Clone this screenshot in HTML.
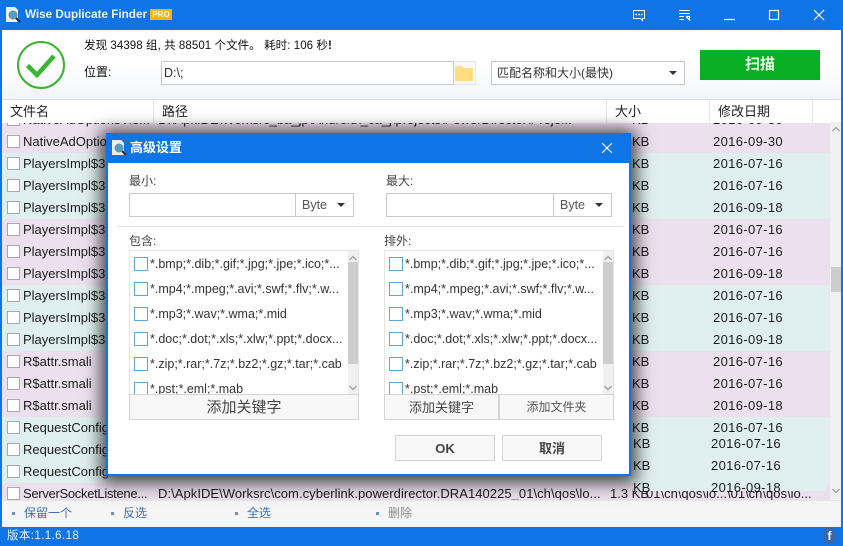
<!DOCTYPE html>
<html><head><meta charset="utf-8">
<style>
*{box-sizing:border-box;margin:0;padding:0}
html,body{width:843px;height:546px;overflow:hidden;background:#fff}
body{position:relative;font-family:"Liberation Sans","Noto Sans CJK SC",sans-serif;font-size:12px;color:#222}
.a{position:absolute;white-space:nowrap}
.row{position:absolute;left:2px;width:828px;height:22px}
.cb{position:absolute;left:5px;top:4px;width:13px;height:13px;background:#fff;border:1px solid #a9a9a9}
.nm{position:absolute;left:21px;top:0;line-height:21px;font-size:13px;color:#1c1c1c;white-space:nowrap}
.kb{position:absolute;left:630px;top:0;line-height:21px;font-size:13px;color:#1c1c1c}
.dt{position:absolute;left:711px;top:0;line-height:21px;font-size:13px;letter-spacing:.35px;color:#1c1c1c}
.th{position:absolute;top:100px;height:23px;line-height:24px;font-size:13px;color:#222;background:#fff;border-right:1px solid #e6e6e6}
.box{position:absolute;border:1px solid #c9c9c9;background:#fff}
.it{position:absolute;left:4px;width:222px;height:25px}
.ck{position:absolute;left:0;top:4px;width:14px;height:14px;border:1px solid #5ca6de;background:#fff}
.tx{position:absolute;left:16px;top:2px;line-height:19px;font-size:12.500px;color:#333;white-space:nowrap}
.btn{position:absolute;border:1px solid #d4d4d4;background:#f8f8f8;text-align:center;color:#444}
.arrow{position:absolute;width:0;height:0;border-left:4px solid transparent;border-right:4px solid transparent;border-top:4px solid #333}
.dot{position:absolute;top:512px;width:3px;height:3px;background:#6f93b8}
.act{position:absolute;top:505px;line-height:16px;font-size:12px;color:#3f6fb5}
</style></head><body>

<!-- title bar -->
<div class="a" style="left:0;top:0;width:843px;height:30px;background:#0f74e5"></div>
<svg class="a" style="left:4px;top:6px" width="18" height="18" viewBox="0 0 18 18"><path d="M2 1h9l3 3v12H2z" fill="#e9eef0"/><circle cx="9" cy="9" r="4" fill="#4da0c6" stroke="#7b8d99"/><path d="M12 12l4 4" stroke="#16324a" stroke-width="2"/></svg>
<div class="a" style="left:25px;top:5px;line-height:19px;font-size:11.700px;font-weight:bold;color:#e9f3ff">Wise Duplicate Finder</div>
<div class="a" style="left:150px;top:9px;width:22px;height:11px;background:#ffb200;color:#fff;font-size:8px;font-weight:bold;line-height:11px;text-align:center">PRO</div>

<svg class="a" style="left:620px;top:0" width="223" height="30" viewBox="0 0 223 30" fill="none" stroke="#fff">
<path d="M13.500 10.500h11v8h-2v2l-2-2h-7z" stroke-width="1"/>
<path d="M15.500 14.500h1.500M18.300 14.500h1.500M21 14.500h1.500" stroke-width="1.500"/>
<path d="M59 10.500h11M59 13.500h11M59 16.500h5M59 19.500h5" stroke-width="1"/>
<path d="M66 16.500h3.500v3.500M66 16.500l4 4" stroke-width="1.200"/>
<path d="M104 19.500h11" stroke-width="1.200"/>
<rect x="149.500" y="10.500" width="9" height="9" stroke-width="1.200"/>
<path d="M194 10l10 10M204 10l-10 10" stroke-width="1.200"/>
</svg>

<!-- top panel -->
<div class="a" style="left:2px;top:30px;width:839px;height:70px;background:linear-gradient(#ffffff 0%,#ffffff 45%,#f1f4f8 100%)"></div>
<div class="a" style="left:0;top:30px;width:2px;height:497px;background:#0f74e5"></div>
<div class="a" style="left:841px;top:30px;width:2px;height:497px;background:#0f74e5"></div>

<svg class="a" style="left:16px;top:40px" width="50" height="50" viewBox="0 0 50 50" fill="none"><circle cx="25" cy="25" r="23" stroke="#3ab52f" stroke-width="2"/><path d="M11.500 25.500l9.500 9.500L38 16" stroke="#3ab52f" stroke-width="4.500"/></svg>

<div class="a" style="left:84px;top:38px;line-height:17px;font-size:11.500px;letter-spacing:.07px;color:#111">发现 34398 组, 共 88501 个文件。 耗时: 106 秒<b>!</b></div>
<div class="a" style="left:84px;top:63px;line-height:18px;font-size:12px;color:#111">位置:</div>
<div class="box" style="left:161px;top:61px;width:293px;height:24px;border-color:#c4c8cc;line-height:22px;padding-left:2px;font-size:12.500px;color:#333">D:\;</div>
<div class="a" style="left:453px;top:61px;width:23px;height:24px;background:#f7f8fa;border:1px solid #e4e6e9;border-left:1px solid #c4c8cc"></div>
<svg class="a" style="left:455px;top:65px" width="18" height="16" viewBox="0 0 18 16"><path d="M0 1h7l2 2h9v13H0z" fill="#ffe08a"/><path d="M0 5h18v11H0z" fill="#ffdc7d"/></svg>
<div class="box" style="left:491px;top:61px;width:194px;height:24px;border-color:#c4c8cc;line-height:22px;padding-left:5px;font-size:12px;color:#333">匹配名称和大小(最快)</div>
<div class="arrow" style="left:669px;top:71px"></div>
<div class="a" style="left:700px;top:50px;width:120px;height:30px;background:#09b026;color:#e8ffe8;font-size:15px;font-weight:bold;text-align:center;line-height:30px">扫描</div>

<!-- list -->
<div class="a" style="left:2px;top:99px;width:839px;height:1px;background:#dcdcdc"></div>
<div class="a" style="left:2px;top:122px;width:828px;height:378px;background:#dfeeef"></div>
<div class="row" style="top:109px;background:#ecdfee"><div class="cb"></div><div class="nm">NativeAdOptionsVie...</div><div class="a" style="left:156px;top:0;line-height:21px;font-size:13px">D:\ApkIDE\Worksrc_ba_jp\Android\_ca_j\projects\PowerDirector\Proje...</div><div class="kb">KB</div><div class="dt">2016-09-30</div></div>
<div class="th" style="left:2px;width:152px;padding-left:8px">文件名</div>
<div class="th" style="left:154px;width:453px;padding-left:8px">路径</div>
<div class="th" style="left:607px;width:103px;padding-left:8px">大小</div>
<div class="th" style="left:710px;width:103px;padding-left:8px">修改日期</div>
<div class="th" style="left:813px;width:28px;border-right:0"></div>

<div class="row" style="top:131px;background:#ecdfee"><div class="cb"></div><div class="nm">NativeAdOptionsVie</div><div class="kb">KB</div><div class="dt">2016-09-30</div></div>
<div class="row" style="top:153px;background:#dfeeef"><div class="cb"></div><div class="nm">PlayersImpl$32</div><div class="kb">KB</div><div class="dt">2016-07-16</div></div>
<div class="row" style="top:175px;background:#dfeeef"><div class="cb"></div><div class="nm">PlayersImpl$32</div><div class="kb">KB</div><div class="dt">2016-07-16</div></div>
<div class="row" style="top:197px;background:#dfeeef"><div class="cb"></div><div class="nm">PlayersImpl$32</div><div class="kb">KB</div><div class="dt">2016-09-18</div></div>
<div class="row" style="top:219px;background:#ecdfee"><div class="cb"></div><div class="nm">PlayersImpl$33</div><div class="kb">KB</div><div class="dt">2016-07-16</div></div>
<div class="row" style="top:241px;background:#ecdfee"><div class="cb"></div><div class="nm">PlayersImpl$33</div><div class="kb">KB</div><div class="dt">2016-07-16</div></div>
<div class="row" style="top:263px;background:#ecdfee"><div class="cb"></div><div class="nm">PlayersImpl$33</div><div class="kb">KB</div><div class="dt">2016-09-18</div></div>
<div class="row" style="top:285px;background:#dfeeef"><div class="cb"></div><div class="nm">PlayersImpl$34</div><div class="kb">KB</div><div class="dt">2016-07-16</div></div>
<div class="row" style="top:307px;background:#dfeeef"><div class="cb"></div><div class="nm">PlayersImpl$34</div><div class="kb">KB</div><div class="dt">2016-07-16</div></div>
<div class="row" style="top:329px;background:#dfeeef"><div class="cb"></div><div class="nm">PlayersImpl$34</div><div class="kb">KB</div><div class="dt">2016-09-18</div></div>
<div class="row" style="top:351px;background:#ecdfee"><div class="cb"></div><div class="nm">R$attr.smali</div><div class="kb">KB</div><div class="dt">2016-07-16</div></div>
<div class="row" style="top:373px;background:#ecdfee"><div class="cb"></div><div class="nm">R$attr.smali</div><div class="kb">KB</div><div class="dt">2016-07-16</div></div>
<div class="row" style="top:395px;background:#ecdfee"><div class="cb"></div><div class="nm">R$attr.smali</div><div class="kb">KB</div><div class="dt">2016-09-18</div></div>
<div class="row" style="top:417px;background:#dfeeef"><div class="cb"></div><div class="nm">RequestConfig</div><div class="kb">KB</div><div class="dt">2016-07-16</div></div>
<div class="row" style="top:439px;background:#dfeeef"><div class="cb"></div><div class="nm">RequestConfig</div><div class="a" style="left:631px;top:-6px;line-height:21px;font-size:13px;color:#1c1c1c">KB</div><div class="a" style="left:709px;top:-6px;line-height:21px;font-size:13px;letter-spacing:.35px;color:#1c1c1c">2016-07-16</div></div>
<div class="row" style="top:461px;background:#dfeeef"><div class="cb"></div><div class="nm">RequestConfig</div><div class="a" style="left:631px;top:-6px;line-height:21px;font-size:13px;color:#1c1c1c">KB</div><div class="a" style="left:709px;top:-6px;line-height:21px;font-size:13px;letter-spacing:.35px;color:#1c1c1c">2016-07-16</div></div>
<div class="row" style="top:483px;height:17px;background:#ecdfee;overflow:hidden"><div class="cb"></div><div class="nm" style="letter-spacing:-.3px">ServerSocketListene...</div><div class="a" style="left:156px;top:0;line-height:21px;font-size:13px;letter-spacing:.05px;color:#1c1c1c">D:\ApkIDE\Worksrc\com.cyberlink.powerdirector.DRA140225_01\ch\qos\lo...</div><div class="a" style="left:608px;top:0;line-height:21px;font-size:13px;color:#1c1c1c">1.3 KB</div><div class="a" style="left:644px;top:0;line-height:21px;font-size:13px;color:#1c1c1c">01\ch\qos\lo...</div><div class="a" style="left:725px;top:0;line-height:21px;font-size:13px;color:#1c1c1c">\01\ch\qos\lo...</div></div>
<div class="a" style="left:633px;top:476px;width:193px;height:15px;background:#dfeeef"></div>
<div class="a" style="left:711px;top:479px;line-height:17px;font-size:13px;letter-spacing:.35px;color:#1c1c1c">2016-09-18</div>
<div class="a" style="left:633px;top:479px;line-height:17px;font-size:13px;color:#1c1c1c">KB</div>

<!-- scrollbar -->
<div class="a" style="left:830px;top:122px;width:11px;height:378px;background:#f0f0f0"></div>
<div class="a" style="left:831px;top:267px;width:10px;height:25px;background:#cdcdcd"></div>
<svg class="a" style="left:831px;top:125px" width="10" height="372" fill="none" stroke="#a5a5a5" stroke-width="1.500"><path d="M1.500 6l3.500-3.500 3.500 3.500M1.500 364l3.500 3.500 3.500-3.500"/></svg>

<!-- action bar -->
<div class="a" style="left:2px;top:500px;width:839px;height:27px;background:#f5f5f5;border-top:1px solid #e4e4e4"></div>
<div class="dot" style="left:12px"></div><div class="act" style="left:24px">保留一个</div>
<div class="dot" style="left:111px"></div><div class="act" style="left:123px">反选</div>
<div class="dot" style="left:235px"></div><div class="act" style="left:247px">全选</div>
<div class="dot" style="left:376px"></div><div class="act" style="left:388px;color:#8a8a8a">删除</div>

<!-- status -->
<div class="a" style="left:0;top:527px;width:843px;height:19px;background:#0f74e5"></div>
<div class="a" style="left:7px;top:528px;line-height:16px;font-size:11.500px;letter-spacing:.4px;color:#e6f1ff">版本:1.1.6.18</div>
<div class="a" style="left:823px;top:528px;width:13px;height:16px;border-radius:7px;background:#3b67a8;color:#fff;font-size:12px;font-weight:bold;line-height:16px;text-align:center">f</div>

<!-- dialog shadow -->
<div class="a" style="left:106px;top:133px;width:525px;height:343px;box-shadow:0 2px 16px 5px rgba(0,0,0,.72)"></div>
<div class="a" style="left:106px;top:133px;width:525px;height:343px;background:#fff;border:1px solid #0f74e5;border-width:0 2px 2px 2px"></div>
<div class="a" style="left:106px;top:133px;width:525px;height:30px;background:#0f74e5"></div>
<svg class="a" style="left:110px;top:139px" width="18" height="18" viewBox="0 0 18 18"><path d="M2 1h9l3 3v12H2z" fill="#e9eef0"/><circle cx="9" cy="9" r="4" fill="#4da0c6" stroke="#7b8d99"/><path d="M12 12l4 4" stroke="#16324a" stroke-width="2"/></svg>
<div class="a" style="left:130px;top:139px;line-height:18px;font-size:13px;font-weight:bold;color:#fff">高级设置</div>
<svg class="a" style="left:601px;top:142px" width="12" height="12" fill="none" stroke="#fff" stroke-width="1.200"><path d="M1 1l10 10M11 1L1 11"/></svg>

<div class="a" style="left:129px;top:173px;line-height:16px;font-size:12px;color:#444">最小:</div>
<div class="a" style="left:386px;top:173px;line-height:16px;font-size:12px;color:#444">最大:</div>
<div class="box" style="left:129px;top:193px;width:225px;height:24px"></div>
<div class="a" style="left:295px;top:193px;width:1px;height:24px;background:#c9c9c9"></div>
<div class="a" style="left:302px;top:197px;line-height:16px;font-size:12.500px;color:#555">Byte</div>
<div class="arrow" style="left:337px;top:203px"></div>
<div class="box" style="left:386px;top:193px;width:226px;height:24px"></div>
<div class="a" style="left:553px;top:193px;width:1px;height:24px;background:#c9c9c9"></div>
<div class="a" style="left:560px;top:197px;line-height:16px;font-size:12.500px;color:#555">Byte</div>
<div class="arrow" style="left:595px;top:203px"></div>
<div class="a" style="left:117px;top:226px;width:506px;height:1px;background:#e2e2e2"></div>

<div class="a" style="left:129px;top:233px;line-height:16px;font-size:12px;color:#444">包含:</div>
<div class="a" style="left:384px;top:233px;line-height:16px;font-size:12px;color:#444">排外:</div>

<div class="box" style="left:129px;top:250px;width:230px;height:145px;border-color:#e4e4e4;overflow:hidden">
 <div class="it" style="top:2px"><div class="ck"></div><div class="tx">*.bmp;*.dib;*.gif;*.jpg;*.jpe;*.ico;*...</div></div>
 <div class="it" style="top:27px"><div class="ck"></div><div class="tx">*.mp4;*.mpeg;*.avi;*.swf;*.flv;*.w...</div></div>
 <div class="it" style="top:52px"><div class="ck"></div><div class="tx">*.mp3;*.wav;*.wma;*.mid</div></div>
 <div class="it" style="top:77px"><div class="ck"></div><div class="tx">*.doc;*.dot;*.xls;*.xlw;*.ppt;*.docx...</div></div>
 <div class="it" style="top:102px"><div class="ck"></div><div class="tx">*.zip;*.rar;*.7z;*.bz2;*.gz;*.tar;*.cab</div></div>
 <div class="it" style="top:127px"><div class="ck"></div><div class="tx">*.pst;*.eml;*.mab</div></div>
</div>
<div class="a" style="left:348px;top:251px;width:10px;height:143px;background:#f0f0f0"></div>
<div class="a" style="left:348px;top:262px;width:10px;height:102px;background:#cdcdcd"></div>
<svg class="a" style="left:348px;top:252px" width="10" height="142" fill="none" stroke="#a5a5a5" stroke-width="1.500"><path d="M1.500 8l3.500-3.500 3.500 3.500M1.500 134l3.500 3.500 3.500-3.500"/></svg>

<div class="box" style="left:384px;top:250px;width:230px;height:145px;border-color:#e4e4e4;overflow:hidden">
 <div class="it" style="top:2px"><div class="ck"></div><div class="tx">*.bmp;*.dib;*.gif;*.jpg;*.jpe;*.ico;*...</div></div>
 <div class="it" style="top:27px"><div class="ck"></div><div class="tx">*.mp4;*.mpeg;*.avi;*.swf;*.flv;*.w...</div></div>
 <div class="it" style="top:52px"><div class="ck"></div><div class="tx">*.mp3;*.wav;*.wma;*.mid</div></div>
 <div class="it" style="top:77px"><div class="ck"></div><div class="tx">*.doc;*.dot;*.xls;*.xlw;*.ppt;*.docx...</div></div>
 <div class="it" style="top:102px"><div class="ck"></div><div class="tx">*.zip;*.rar;*.7z;*.bz2;*.gz;*.tar;*.cab</div></div>
 <div class="it" style="top:127px"><div class="ck"></div><div class="tx">*.pst;*.eml;*.mab</div></div>
</div>
<div class="a" style="left:603px;top:251px;width:10px;height:143px;background:#f0f0f0"></div>
<div class="a" style="left:603px;top:262px;width:10px;height:102px;background:#cdcdcd"></div>
<svg class="a" style="left:603px;top:252px" width="10" height="142" fill="none" stroke="#a5a5a5" stroke-width="1.500"><path d="M1.500 8l3.500-3.500 3.500 3.500M1.500 134l3.500 3.500 3.500-3.500"/></svg>

<div class="btn" style="left:129px;top:394px;width:230px;height:26px;line-height:25px;font-size:15px">添加关键字</div>
<div class="btn" style="left:384px;top:394px;width:115px;height:26px;line-height:25px;font-size:13px">添加关键字</div>
<div class="btn" style="left:499px;top:394px;width:115px;height:26px;line-height:25px;font-size:12px;color:#555">添加文件夹</div>
<div class="btn" style="left:395px;top:435px;width:100px;height:26px;line-height:25px;font-size:13px;font-weight:bold">OK</div>
<div class="btn" style="left:502px;top:435px;width:100px;height:26px;line-height:25px;font-size:13px;font-weight:bold">取消</div>

</body></html>
